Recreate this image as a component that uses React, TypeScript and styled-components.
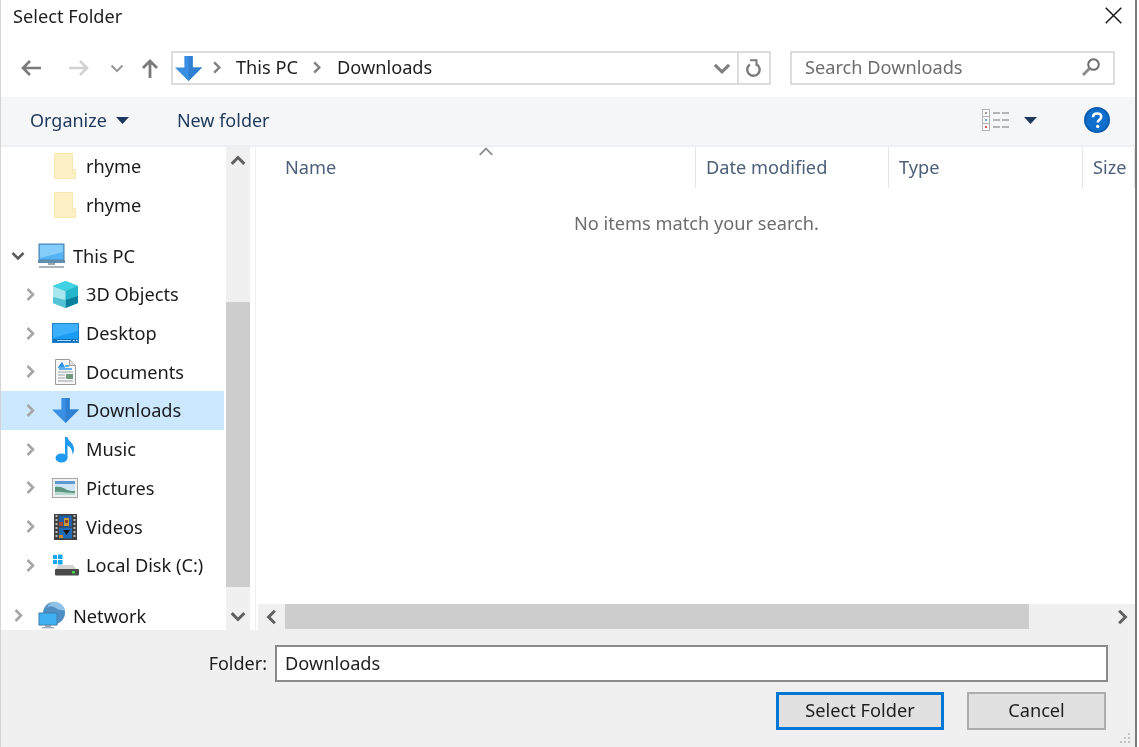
import React from 'react';
import styled, { createGlobalStyle } from 'styled-components';

const GlobalStyle = createGlobalStyle`
  html, body {
    margin: 0;
    height: 100%;
    background: #fff;
    overflow: hidden;
  }
  body {
    font-family: "Noto Sans", "Open Sans", sans-serif;
    font-size: 18.2px;
    color: #1e1e1e;
  }
`;

const Dialog = styled.div`
  width: 1137px;
  height: 747px;
  box-sizing: border-box;
  display: flex;
  flex-direction: column;
  border-left: 1px solid #d4d4d4;
  border-right: 2px solid #7a7a7a;
  background: #fff;
  filter: blur(0.35px);
`;

const TitleBar = styled.div`
  height: 33px;
  flex: none;
  box-sizing: border-box;
  display: flex;
  align-items: center;
  justify-content: space-between;
  padding: 0 6px 2px 12px;
`;

const CloseButton = styled.div`
  width: 32px;
  height: 32px;
  display: flex;
  align-items: center;
  justify-content: center;
`;

const NavBar = styled.div`
  height: 64px;
  flex: none;
  display: flex;
  align-items: center;
  box-sizing: border-box;
  padding: 6px 20px 0 19px;
`;

const NavIcon = styled.div<{ $gap: number }>`
  display: flex;
  margin-left: ${(p) => p.$gap}px;
`;

const AddressBox = styled.div`
  width: 600px;
  height: 34px;
  margin-left: 12px;
  box-sizing: border-box;
  border: 2px solid #dcdcdc;
  display: flex;
  align-items: center;
  padding-left: 2px;
`;

const Crumb = styled.span<{ $gap: number }>`
  margin-left: ${(p) => p.$gap}px;
  padding-bottom: 2px;
  display: flex;
`;

const AddressTail = styled.div`
  margin-left: auto;
  height: 100%;
  display: flex;
  align-items: center;
`;

const RefreshCell = styled.div`
  width: 32px;
  height: 100%;
  box-sizing: border-box;
  border-left: 2px solid #dcdcdc;
  margin-left: 6px;
  display: flex;
  align-items: center;
  justify-content: center;
`;

const SearchBox = styled.div`
  width: 325px;
  height: 34px;
  margin-left: 19px;
  box-sizing: border-box;
  border: 2px solid #dcdcdc;
  display: flex;
  align-items: center;
  justify-content: space-between;
  padding: 0 12px 2px 13px;
  color: #6d6d6d;
`;

const CommandBar = styled.div`
  height: 50px;
  flex: none;
  box-sizing: border-box;
  background: #f5f6f7;
  border-bottom: 2px solid #eeeff0;
  display: flex;
  align-items: center;
  padding: 0 25px 2px 29px;
  color: #1e395b;
  font-size: 18px;
`;

const CommandItem = styled.div<{ $gap?: number }>`
  display: flex;
  align-items: center;
  gap: 9px;
  margin-left: ${(p) => p.$gap ?? 0}px;
`;

const CommandSpacer = styled.div`
  flex: 1;
`;

const Main = styled.div`
  flex: 1;
  min-height: 0;
  display: flex;
`;

const NavPane = styled.div`
  width: 225px;
  flex: none;
  box-sizing: border-box;
  padding-right: 2px;
  overflow: hidden;
`;

const TreeRow = styled.div<{ $selected?: boolean; $root?: boolean; $section?: boolean }>`
  height: 38.7px;
  margin-top: ${(p) => (p.$section ? 12 : 0)}px;
  display: flex;
  align-items: center;
  background: ${(p) => (p.$selected ? '#cce8ff' : 'transparent')};
  padding-left: ${(p) => (p.$root ? 10 : 22)}px;
  color: #1a1a1a;
`;

const TreeToggle = styled.div`
  width: 14px;
  flex: none;
  display: flex;
  justify-content: center;
`;

const TreeIcon = styled.div<{ $root?: boolean }>`
  width: 28px;
  flex: none;
  margin-left: ${(p) => (p.$root ? 13 : 14)}px;
  margin-right: 7px;
  display: flex;
  justify-content: center;
`;

const VScroll = styled.div`
  width: 24px;
  flex: none;
  background: #f0f0f0;
  display: flex;
  flex-direction: column;
  align-items: stretch;
`;

const ScrollArrow = styled.div<{ $size: number; $width?: number }>`
  height: ${(p) => p.$size}px;
  ${(p) => (p.$width ? `width: ${p.$width}px;` : '')}
  flex: none;
  display: flex;
  align-items: center;
  justify-content: center;
`;

const VThumbTrack = styled.div`
  flex: 1;
  min-height: 0;
  display: flex;
  flex-direction: column;
`;

const VThumb = styled.div`
  height: 285px;
  margin-top: 127px;
  background: #cdcdcd;
`;

const Splitter = styled.div`
  width: 6px;
  flex: none;
  margin-right: 2px;
  background: #fff;
  border-right: 1px solid #f0f0f0;
  box-sizing: border-box;
`;

const ListPane = styled.div`
  flex: 1;
  min-width: 0;
  display: flex;
  flex-direction: column;
`;

const ListHeader = styled.div`
  height: 41px;
  flex: none;
  display: flex;
  position: relative;
  color: #4c607a;
`;

const HeaderCell = styled.div<{ $width: number }>`
  width: ${(p) => p.$width}px;
  flex: none;
  box-sizing: border-box;
  display: flex;
  align-items: center;
  padding: 0 0 2px 10px;
  border-right: 1px solid #e5e5e5;
  white-space: nowrap;
  overflow: hidden;

  &:last-of-type {
    border-right: none;
    flex: 1;
  }
`;

const NameLabel = styled.span`
  padding-left: 17px;
`;

const SortMark = styled.div`
  position: absolute;
  left: 220px;
  top: -3px;
  display: flex;
`;

const ListBody = styled.div`
  flex: 1;
  min-height: 0;
  display: flex;
  justify-content: center;
  padding-top: 23px;
  color: #6d6d6d;
`;

const HScroll = styled.div`
  height: 26px;
  flex: none;
  background: #f0f0f0;
  display: flex;
  align-items: stretch;
`;

const HTrack = styled.div`
  flex: 1;
  padding-bottom: 1px;
  display: flex;
`;

const HThumb = styled.div`
  width: 744px;
  background: #cdcdcd;
`;

const Footer = styled.div`
  height: 117px;
  flex: none;
  position: relative;
  box-sizing: border-box;
  background: #f0f0f0;
  padding: 15px 27px 0 0;
  display: flex;
  flex-direction: column;
  align-items: flex-end;
`;

const FolderRow = styled.div`
  display: flex;
  align-items: center;
  gap: 8px;
`;

const FolderLabel = styled.span`
  padding-bottom: 2px;
  font-size: 18px;
`;

const FolderInput = styled.div`
  width: 833px;
  height: 37px;
  box-sizing: border-box;
  border: 2px solid #8a8a8a;
  background: #fff;
  display: flex;
  align-items: center;
  padding: 0 0 2px 8px;
`;

const ButtonRow = styled.div`
  display: flex;
  gap: 23px;
  margin-top: 10px;
  margin-right: 2px;
`;

const DialogButton = styled.div<{ $primary?: boolean; $width: number }>`
  width: ${(p) => p.$width}px;
  height: 38px;
  box-sizing: border-box;
  background: #e1e1e1;
  border: ${(p) => (p.$primary ? '3px solid #0078d7' : '2px solid #adadad')};
  display: flex;
  align-items: center;
  justify-content: center;
  padding-bottom: 2px;
`;

const Grip = styled.div`
  position: absolute;
  right: 3px;
  bottom: 2px;
  display: flex;
`;

const Chevron = ({ dir, color = '#a6a6a6', size = 14, width = 2.6 }: { dir: 'left' | 'right' | 'up' | 'down'; color?: string; size?: number; width?: number }) => {
  const pts = {
    right: '4.5,1.5 10,7 4.5,12.5',
    left: '9.5,1.5 4,7 9.5,12.5',
    up: '1.5,9.5 7,4 12.5,9.5',
    down: '1.5,4.5 7,10 12.5,4.5',
  }[dir];
  return (
    <svg width={size} height={size} viewBox="0 0 14 14">
      <polyline points={pts} fill="none" stroke={color} strokeWidth={width} />
    </svg>
  );
};

const Caret = ({ color = '#1e395b' }: { color?: string }) => (
  <svg width="13" height="7" viewBox="0 0 13 7">
    <path d="M0 0h13L6.5 7z" fill={color} />
  </svg>
);

const ArrowLeft = () => (
  <svg width="21" height="18" viewBox="0 0 21 18">
    <path d="M21 9H3M10 2L3 9l7 7" fill="none" stroke="#7a7a7a" strokeWidth="2.6" />
  </svg>
);

const ArrowRight = () => (
  <svg width="21" height="18" viewBox="0 0 21 18">
    <path d="M0 9h18M11 2l7 7-7 7" fill="none" stroke="#d2d2d2" strokeWidth="2.6" />
  </svg>
);

const ArrowUp = () => (
  <svg width="18" height="20" viewBox="0 0 18 20">
    <path d="M9 20V3M2 10l7-7 7 7" fill="none" stroke="#7a7a7a" strokeWidth="2.8" />
  </svg>
);

const BlueArrow = ({ size = 27 }: { size?: number }) => (
  <svg width={size} height={size} viewBox="0 0 26 26">
    <path d="M9 1h8v11h9L13 25 0 12h9z" fill="#3a8fe3" />
    <path d="M13 1h4v11h9L13 25z" fill="#2f80d2" />
  </svg>
);

const FolderIcon = () => (
  <svg width="22" height="26" viewBox="0 0 22 26">
    <path d="M.5.5h18v20h3v5H.5z" fill="#fdf0c4" stroke="#f7e7b0" />
    <path d="M18.5 20.5v-4h3v4" fill="#fdf3d2" stroke="#f7e7b0" />
  </svg>
);

const PcIcon = () => (
  <svg width="28" height="26" viewBox="0 0 28 26">
    <rect x="1" y="1" width="25" height="16" fill="#55b4f5" stroke="#4a7fa8" />
    <path d="M2 2h23v7L2 15z" fill="#84cdfa" />
    <rect x="0" y="17" width="27" height="3" fill="#5f8dab" />
    <rect x="10" y="20" width="7" height="2" fill="#9aa7b0" />
    <rect x="1" y="23" width="25" height="2" fill="#a9b4bc" />
  </svg>
);

const CubeIcon = () => (
  <svg width="27" height="27" viewBox="0 0 27 27">
    <path d="M13.5 0L26 5v17l-12.5 5L1 22V5z" fill="#25b5cb" />
    <path d="M1 5l12.5 5v17L1 22z" fill="#a7e6ec" />
    <path d="M13.5 0L26 5l-12.5 5L1 5z" fill="#40d2e2" />
    <path d="M13.5 19L26 15v7l-12.5 5z" fill="#0d7f9e" />
    <path d="M1 16l12.5 3v8L1 22z" fill="#52c2d4" />
  </svg>
);

const DesktopIcon = () => (
  <svg width="27" height="20" viewBox="0 0 27 20">
    <rect x=".5" y=".5" width="26" height="19" fill="#1a9bf5" stroke="#1f7fc8" />
    <path d="M1 1h25v7L1 15z" fill="#3cb0fa" />
    <rect x="1" y="16" width="25" height="3" fill="#1472bb" />
    <rect x="5" y="17" width="14" height="1" fill="#a8d8f8" />
    <rect x="21" y="17" width="1.5" height="1" fill="#d7eefc" />
    <rect x="24" y="17" width="1.5" height="1" fill="#d7eefc" />
  </svg>
);

const DocIcon = () => (
  <svg width="21" height="26" viewBox="0 0 21 26">
    <path d="M.5.5h14l6 6v19H.5z" fill="#f8f8f8" stroke="#9a9a9a" />
    <path d="M14.5.5v6h6" fill="#e2e2e2" stroke="#9a9a9a" />
    <path d="M4 8l3-4 2 4zM10 7h4M4 10h13" stroke="#2f95e8" strokeWidth="1.4" fill="#2f95e8" />
    <path d="M3 13h15M3 16h7M3 19h7M3 22h15" stroke="#9aa0a5" strokeWidth="1.2" />
    <rect x="11" y="15" width="7" height="5" fill="#6f9a80" />
  </svg>
);

const MusicIcon = () => (
  <svg width="20" height="27" viewBox="0 0 20 27">
    <ellipse cx="6.5" cy="22" rx="6" ry="4.5" fill="#1e9bf0" />
    <path d="M10 1h2.5c.5 4 6.5 6 6.5 12 0 2-.5 4-1.5 5.5 0-5-2.5-8-5-9V22H10z" fill="#1e9bf0" />
  </svg>
);

const PictureIcon = () => (
  <svg width="26" height="20" viewBox="0 0 26 20">
    <rect x=".5" y=".5" width="25" height="19" fill="#f0f0f0" stroke="#a8a8a8" />
    <rect x="3" y="3" width="20" height="14" fill="#cfe4f4" />
    <path d="M3 3h20v3H3z" fill="#5c9bd0" />
    <path d="M3 9c5-1 9 1 12 3 3 1 6 1 8 1v4H3z" fill="#5a9680" />
    <path d="M3 14c6-1 12 1 20 1v2H3z" fill="#b7d8cf" />
  </svg>
);

const VideoIcon = () => (
  <svg width="23" height="26" viewBox="0 0 23 26">
    <rect x="0" y="0" width="23" height="26" fill="#3f3f3f" />
    <path d="M1.5 2h2M1.5 6h2M1.5 10h2M1.5 14h2M1.5 18h2M1.5 22h2M19.5 2h2M19.5 6h2M19.5 10h2M19.5 14h2M19.5 18h2M19.5 22h2" stroke="#e8e8e8" strokeWidth="1.6" />
    <rect x="5" y="1.5" width="13" height="11" fill="#1f5ea8" />
    <rect x="5" y="13.5" width="13" height="11" fill="#1f6bb5" />
    <path d="M10 4h5v8h-5z" fill="#c99a3a" />
    <path d="M11 6h3v3h-3z" fill="#8c3a2a" />
    <path d="M5 8h4v4H5z" fill="#a84a30" />
    <path d="M9 16h7l-3.5 5z" fill="#1a1a1a" />
    <rect x="5" y="21" width="4" height="3" fill="#c9872c" />
  </svg>
);

const DiskIcon = () => (
  <svg width="27" height="22" viewBox="0 0 27 22">
    <path d="M1 1h4v4H1zM6 .5h4.5v4.5H6zM1 6h4v4H1zM6 6h4.5v4.5H6z" fill="#19a6f0" />
    <path d="M6 11h15l5 6H3z" fill="#d4d4d4" />
    <rect x="3" y="15" width="24" height="6.5" rx="1" fill="#4a4a4a" />
    <rect x="20" y="17" width="3" height="2.5" fill="#3fd24a" />
  </svg>
);

const NetworkIcon = () => (
  <svg width="28" height="27" viewBox="0 0 28 27">
    <circle cx="16" cy="11" r="11" fill="#4f8fc4" />
    <path d="M16 0c5 0 10 3 11 8-4 1-8-1-11-3-3-1-5-1-7 1 1-3 4-6 7-6z" fill="#8ec2e8" />
    <rect x="1" y="11" width="18" height="12" fill="#3fb0f2" stroke="#3e7fae" />
    <rect x="7" y="23" width="6" height="2" fill="#8ca2b2" />
    <rect x="4" y="25" width="12" height="1.5" fill="#a9b4bc" />
  </svg>
);

const CloseGlyph = () => (
  <svg width="17" height="17" viewBox="0 0 17 17">
    <path d="M.7.7l15.6 15.6M16.3.7L.7 16.3" stroke="#1a1a1a" strokeWidth="1.5" fill="none" />
  </svg>
);

const RefreshGlyph = () => (
  <svg width="16" height="19" viewBox="0 0 16 19">
    <path d="M10.5 5.2a6.2 6.2 0 1 1-6.6.3" fill="none" stroke="#7b7b7b" strokeWidth="2.4" />
    <path d="M4 1.2h6.5V7" fill="none" stroke="#7b7b7b" strokeWidth="2" />
  </svg>
);

const SearchGlyph = () => (
  <svg width="20" height="20" viewBox="0 0 20 20">
    <circle cx="12.5" cy="7.5" r="5.3" fill="none" stroke="#6e6e6e" strokeWidth="2" />
    <path d="M8.5 11.5L2 18" stroke="#8d8d8d" strokeWidth="3" />
  </svg>
);

const ViewGlyph = () => (
  <svg width="27" height="22" viewBox="0 0 27 22">
    <rect x=".5" y=".5" width="7" height="21" fill="#f7f7f7" stroke="#b5b5b5" />
    <path d="M.5 7.5h7M.5 14.5h7" stroke="#b5b5b5" />
    <rect x="3" y="3" width="2" height="2" fill="#999" />
    <rect x="3" y="10" width="2" height="2" fill="#6a9fe0" />
    <rect x="3" y="17" width="2" height="2" fill="#d85a5a" />
    <path d="M11 4h7M20 4h7M11 11h7M20 11h7M11 18h7M20 18h7" stroke="#a0a0a0" strokeWidth="1.5" />
  </svg>
);

const HelpGlyph = () => (
  <svg width="26" height="26" viewBox="0 0 26 26">
    <circle cx="13" cy="13" r="13" fill="#0a5db0" />
    <circle cx="13" cy="13" r="11" fill="#0f6fcc" />
    <path d="M9 10.2c0-2.3 1.8-3.7 4.2-3.7 2.4 0 4 1.3 4 3.3 0 3-3.4 3-3.4 5.7" fill="none" stroke="#fff" strokeWidth="2.5" />
    <circle cx="13.7" cy="19.4" r="1.7" fill="#fff" />
  </svg>
);

const GripGlyph = () => (
  <svg width="14" height="14" viewBox="0 0 14 14" fill="#c4c4c4">
    <rect x="10" y="2" width="2" height="2" />
    <rect x="6" y="6" width="2" height="2" />
    <rect x="10" y="6" width="2" height="2" />
    <rect x="2" y="10" width="2" height="2" />
    <rect x="6" y="10" width="2" height="2" />
    <rect x="10" y="10" width="2" height="2" />
  </svg>
);

type TreeItem = {
  label: string;
  icon: React.ReactNode;
  toggle?: 'right' | 'down';
  root?: boolean;
  section?: boolean;
  selected?: boolean;
};

const treeItems: TreeItem[] = [
  { label: 'rhyme', icon: <FolderIcon /> },
  { label: 'rhyme', icon: <FolderIcon /> },
  { label: 'This PC', icon: <PcIcon />, toggle: 'down', root: true, section: true },
  { label: '3D Objects', icon: <CubeIcon />, toggle: 'right' },
  { label: 'Desktop', icon: <DesktopIcon />, toggle: 'right' },
  { label: 'Documents', icon: <DocIcon />, toggle: 'right' },
  { label: 'Downloads', icon: <BlueArrow />, toggle: 'right', selected: true },
  { label: 'Music', icon: <MusicIcon />, toggle: 'right' },
  { label: 'Pictures', icon: <PictureIcon />, toggle: 'right' },
  { label: 'Videos', icon: <VideoIcon />, toggle: 'right' },
  { label: 'Local Disk (C:)', icon: <DiskIcon />, toggle: 'right' },
  { label: 'Network', icon: <NetworkIcon />, toggle: 'right', root: true, section: true },
];

const App: React.FC = () => {
  return (
    <Dialog>
      <GlobalStyle />
      <TitleBar>
        <span>Select Folder</span>
        <CloseButton>
          <CloseGlyph />
        </CloseButton>
      </TitleBar>
      <NavBar>
        <NavIcon $gap={0}>
          <ArrowLeft />
        </NavIcon>
        <NavIcon $gap={28}>
          <ArrowRight />
        </NavIcon>
        <NavIcon $gap={20}>
          <Chevron dir="down" color="#9a9a9a" size={14} width={2} />
        </NavIcon>
        <NavIcon $gap={17}>
          <ArrowUp />
        </NavIcon>
        <AddressBox>
          <BlueArrow />
          <Crumb $gap={8}>
            <Chevron dir="right" color="#7f7f7f" size={13} />
          </Crumb>
          <Crumb $gap={13}>This PC</Crumb>
          <Crumb $gap={12}>
            <Chevron dir="right" color="#7f7f7f" size={13} />
          </Crumb>
          <Crumb $gap={14}>Downloads</Crumb>
          <AddressTail>
            <Chevron dir="down" color="#7f7f7f" size={18} width={2.4} />
            <RefreshCell>
              <RefreshGlyph />
            </RefreshCell>
          </AddressTail>
        </AddressBox>
        <SearchBox>
          <span>Search Downloads</span>
          <SearchGlyph />
        </SearchBox>
      </NavBar>
      <CommandBar>
        <CommandItem>
          Organize <Caret />
        </CommandItem>
        <CommandItem $gap={48}>New folder</CommandItem>
        <CommandSpacer />
        <CommandItem>
          <ViewGlyph />
        </CommandItem>
        <CommandItem $gap={15}>
          <Caret />
        </CommandItem>
        <CommandItem $gap={47}>
          <HelpGlyph />
        </CommandItem>
      </CommandBar>
      <Main>
        <NavPane>
          {treeItems.map((item, i) => (
            <TreeRow key={i} $selected={item.selected} $root={item.root} $section={item.section}>
              <TreeToggle>
                {item.toggle && (
                  <Chevron
                    dir={item.toggle}
                    size={17}
                    color={item.toggle === 'down' ? '#5c5c5c' : '#a6a6a6'}
                  />
                )}
              </TreeToggle>
              <TreeIcon $root={item.root}>{item.icon}</TreeIcon>
              <span>{item.label}</span>
            </TreeRow>
          ))}
        </NavPane>
        <VScroll>
          <ScrollArrow $size={28}>
            <Chevron dir="up" color="#606060" size={16} />
          </ScrollArrow>
          <VThumbTrack>
            <VThumb />
          </VThumbTrack>
          <ScrollArrow $size={28}>
            <Chevron dir="down" color="#606060" size={16} />
          </ScrollArrow>
        </VScroll>
        <Splitter />
        <ListPane>
          <ListHeader>
            <HeaderCell $width={438}>
              <NameLabel>Name</NameLabel>
            </HeaderCell>
            <HeaderCell $width={193}>Date modified</HeaderCell>
            <HeaderCell $width={194}>Type</HeaderCell>
            <HeaderCell $width={52}>Size</HeaderCell>
            <SortMark>
              <Chevron dir="up" color="#8c8c8c" size={16} width={1.6} />
            </SortMark>
          </ListHeader>
          <ListBody>No items match your search.</ListBody>
          <HScroll>
            <ScrollArrow $size={26} $width={27}>
              <Chevron dir="left" color="#606060" size={16} />
            </ScrollArrow>
            <HTrack>
              <HThumb />
            </HTrack>
            <ScrollArrow $size={26} $width={27}>
              <Chevron dir="right" color="#606060" size={16} />
            </ScrollArrow>
          </HScroll>
        </ListPane>
      </Main>
      <Footer>
        <FolderRow>
          <FolderLabel>Folder:</FolderLabel>
          <FolderInput>Downloads</FolderInput>
        </FolderRow>
        <ButtonRow>
          <DialogButton $primary $width={168}>
            Select Folder
          </DialogButton>
          <DialogButton $width={139}>Cancel</DialogButton>
        </ButtonRow>
        <Grip>
          <GripGlyph />
        </Grip>
      </Footer>
    </Dialog>
  );
};

export default App;
